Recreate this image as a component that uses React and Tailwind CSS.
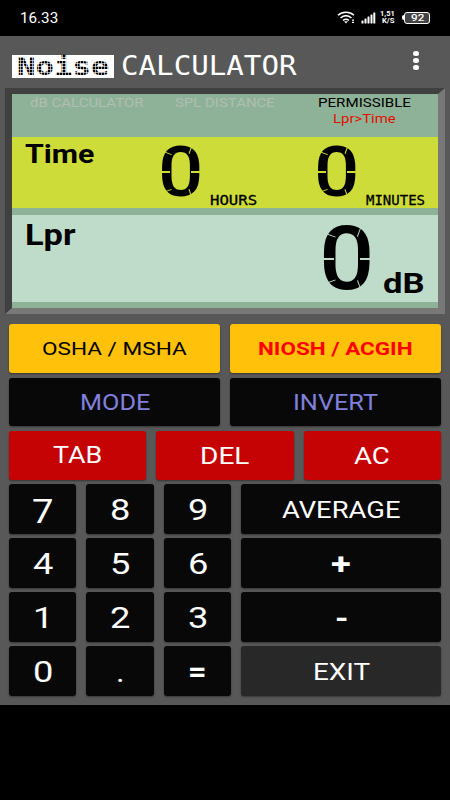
import React, { useLayoutEffect, useRef, useState } from 'react';

// text squeezed or stretched to the width of its box
const Fit = ({ box, className = '', children }) => {
    const outer = useRef(null);
    const inner = useRef(null);
    const [scale, setScale] = useState(1);

    useLayoutEffect(
        () => {
            setScale(outer.current.clientWidth / inner.current.offsetWidth);
        },
        [children]
    )

    return (
        <span ref={outer} className={`block shrink-0 text-left ${box}`}>
            <span
                ref={inner}
                className={`block w-max whitespace-nowrap origin-left ${className}`}
                style={{ transform: `scaleX(${scale})` }}
            >
                {children}
            </span>
        </span>
    );
}

const Digit = ({ box, font, gap, value }) => {
    return (
        <div className={`relative shrink-0 ${box}`}>
            <Fit box="w-full" className={`font-[Roboto,sans-serif] font-medium ${font}`}>{value}</Fit>
            <span className={`absolute left-0 top-[49%] h-[2px] w-[26%] ${gap}`}></span>
            <span className={`absolute right-0 top-[49%] h-[2px] w-[26%] ${gap}`}></span>
            <span className={`absolute left-[4%] top-[12%] h-px w-[26%] rotate-[20deg] ${gap}`}></span>
            <span className={`absolute left-[4%] bottom-[12%] h-px w-[26%] rotate-[-20deg] ${gap}`}></span>
            <span className={`absolute right-[26%] top-[-1%] h-[18%] w-px rotate-[20deg] ${gap}`}></span>
            <span className={`absolute right-[26%] bottom-[-1%] h-[18%] w-px rotate-[-20deg] ${gap}`}></span>
        </div>
    );
}

const Key = ({ color = 'bg-[#080808] text-white', box, font = 'text-[29px]', className = 'pt-[2px]', children }) => {
    return (
        <button
            type="button"
            className={`flex items-center justify-center rounded-[3px] shadow-[0_1px_2px_rgba(0,0,0,0.4)] ${color} ${className}`}
        >
            <Fit box={box} className={`leading-none ${font}`}>{children}</Fit>
        </button>
    );
}

const StatusBar = () => {
    return (
        <div className="flex h-9 justify-between bg-black pl-5 pr-5 text-white">
            <Fit box="w-[38px] pt-[10px]" className="text-[14px] leading-[16px]">16.33</Fit>
            <div className="flex pt-[11px]">
                <svg width="18" height="13" viewBox="0 0 18 13" fill="none" stroke="white" strokeWidth="1.5">
                    <path d="M1 4.2C5.5 0.2 12.5 0.2 17 4.2" />
                    <path d="M3.5 7C7 4 11 4 14.5 7" />
                    <path d="M6 9.4C8 7.8 10 7.8 12 9.4" />
                    <path d="M9 12.4L7 10.3H11Z" fill="white" stroke="none" />
                    <path d="M15 9.2H17M15 11.4H17" strokeWidth="1.2" />
                </svg>
                <svg className="ml-[6px]" width="15" height="13" viewBox="0 0 15 13" fill="white">
                    <rect x="0.5" y="9.5" width="2" height="3" rx="0.5" />
                    <rect x="3.5" y="7.5" width="2" height="5" rx="0.5" />
                    <rect x="6.5" y="5.5" width="2" height="7" rx="0.5" />
                    <rect x="9.5" y="3.5" width="2" height="9" rx="0.5" />
                    <rect x="12.3" y="1.5" width="2" height="11" rx="0.5" />
                </svg>
                <div className="ml-[4px] flex flex-col items-center text-[7px] font-bold leading-[7px]">
                    <Fit box="w-[15px]">1,51</Fit>
                    <Fit box="w-[12px]">K/S</Fit>
                </div>
                <div className="ml-[7px] mt-[4px] h-[5px] w-[2px] rounded-l bg-white"></div>
                <div className="mt-[1px] flex h-[12px] w-[26px] items-center justify-center rounded-[3px] border border-white bg-[#444]">
                    <Fit box="w-[13px]" className="text-[9px] font-medium leading-[9px]">92</Fit>
                </div>
            </div>
        </div>
    );
}

const Header = () => {
    return (
        <div className="flex h-[52px] items-start pl-3">
            <div className="relative mt-[19px] h-[23px] w-[102px] bg-white pl-[5px] text-black">
                <Fit box="w-[92px]" className="font-['DejaVu_Sans_Mono',monospace] text-[25px] leading-[23px] font-bold">Noise</Fit>
                <div className="absolute inset-0 bg-[repeating-linear-gradient(to_right,transparent_0_2px,rgba(255,255,255,0.6)_2px_3px),repeating-linear-gradient(to_bottom,transparent_0_2px,rgba(255,255,255,0.6)_2px_3px)]"></div>
            </div>
            <Fit box="ml-[7px] mt-[17px] w-[176px]" className="font-['DejaVu_Sans_Mono',monospace] text-[27px] leading-[26px] text-white">CALCULATOR</Fit>
            <div className="ml-auto mr-[31px] mt-[15px] flex flex-col gap-[2px]">
                <span className="h-[5px] w-[6px] rounded-full bg-white"></span>
                <span className="h-[5px] w-[6px] rounded-full bg-white"></span>
                <span className="h-[5px] w-[6px] rounded-full bg-white"></span>
            </div>
        </div>
    );
}

const Display = () => {
    const lcd = "font-['DejaVu_Sans_Mono',monospace] text-[14px] leading-[14px] [-webkit-text-stroke:0.3px_black]";

    return (
        <div className="mx-[5px] h-[226px] border-x-[7px] border-y-[6px] border-t-[#404040] border-r-[#787878] border-b-[#787878] border-l-[#404040] bg-[#8eb297]">
            <div className="flex h-[43px] pl-[18px] pt-[1px] text-[13px] leading-[15px] text-[#b0beb3]">
                <Fit box="w-[113px]">dB CALCULATOR</Fit>
                <Fit box="ml-[32px] w-[100px]">SPL DISTANCE</Fit>
                <div className="ml-[43px] flex flex-col items-center text-black">
                    <Fit box="w-[93px]">PERMISSIBLE</Fit>
                    <Fit box="w-[63px] mt-[1px]" className="text-[#e01000]">Lpr&gt;Time</Fit>
                </div>
            </div>
            <div className="flex h-[71px] bg-[#cddc39] pl-[13px] text-black">
                <Fit box="w-[69px]" className="text-[25px] leading-[35px] font-bold">Time</Fit>
                <Digit box="ml-[64px] mt-[9px] h-[52px] w-[45px]" font="text-[71px] leading-[52px]" gap="bg-[#cddc39]" value="0" />
                <Fit box="ml-[7px] mt-[56px] w-[47px]" className={lcd}>HOURS</Fit>
                <Digit box="ml-[57px] mt-[9px] h-[52px] w-[45px]" font="text-[71px] leading-[52px]" gap="bg-[#cddc39]" value="0" />
                <Fit box="ml-[7px] mt-[56px] w-[59px]" className={lcd}>MINUTES</Fit>
            </div>
            <div className="mt-[7px] flex h-[87px] bg-[#bfdcca] pl-[13px] text-black">
                <Fit box="w-[51px]" className="text-[29px] leading-[40px] font-bold">Lpr</Fit>
                <Digit box="ml-[243px] mt-[11px] h-[65px] w-[56px]" font="text-[89px] leading-[65px]" gap="bg-[#bfdcca]" value="0" />
                <Fit box="ml-[8px] mt-[54px] w-[42px]" className="text-[28px] leading-[30px] font-bold">dB</Fit>
            </div>
        </div>
    );
}

const Keypad = () => {
    const yellow = 'bg-[#ffc10a]';
    const red = 'bg-[#c50204] text-white';
    const violet = 'bg-[#080808] text-[#8080dc]';

    return (
        <div className="px-[9px] pt-[10px]">
            <div className="grid grid-cols-2 gap-x-[10px]">
                <Key color={`${yellow} text-black`} box="w-[145px]" font="text-[19px]" className="h-[49px]">OSHA / MSHA</Key>
                <Key color={`${yellow} text-[#ff0000]`} box="w-[155px]" font="text-[19px] font-bold" className="h-[49px]">NIOSH / ACGIH</Key>
                <Key color={violet} box="w-[70px]" font="text-[22px]" className="mt-[5px] h-[48px] pt-px">MODE</Key>
                <Key color={violet} box="w-[85px]" font="text-[22px]" className="mt-[5px] h-[48px] pt-px">INVERT</Key>
            </div>
            <div className="mt-[5px] grid grid-cols-3 gap-x-[10px]">
                <Key color={red} box="w-[49px]" font="text-[23px]" className="h-[49px]">TAB</Key>
                <Key color={red} box="w-[50px]" font="text-[23px]" className="h-[49px] pt-px">DEL</Key>
                <Key color={red} box="w-[36px]" font="text-[23px]" className="h-[49px] pt-px">AC</Key>
            </div>
            <div className="mt-1 grid auto-rows-[50px] grid-cols-[67px_68px_67px_200px] gap-x-[10px] gap-y-1">
                <Key box="w-[22px]" font="text-[33px]" className="pt-[5px]">7</Key>
                <Key box="w-[20px]">8</Key>
                <Key box="w-[20px]">9</Key>
                <Key box="w-[119px]" font="text-[23px]">AVERAGE</Key>
                <Key box="w-[20px]">4</Key>
                <Key box="w-[20px]">5</Key>
                <Key box="w-[20px]">6</Key>
                <Key box="w-[20px]" font="text-[29px] font-bold">+</Key>
                <Key box="w-[20px]">1</Key>
                <Key box="w-[20px]">2</Key>
                <Key box="w-[20px]">3</Key>
                <Key box="w-[13px]" font="text-[29px] font-bold">-</Key>
                <Key box="w-[20px]">0</Key>
                <Key box="w-[9px]">.</Key>
                <Key box="w-[19px]" font="text-[29px] font-bold">=</Key>
                <Key color="bg-[#282828] text-white" box="w-[57px]" font="text-[23px]">EXIT</Key>
            </div>
        </div>
    );
}

const App = () => {
    return (
        <div className="h-[800px] w-[450px] overflow-hidden bg-black font-[Roboto,sans-serif]">
            <StatusBar />
            <div className="h-[669px] bg-[#585858]">
                <Header />
                <Display />
                <Keypad />
            </div>
        </div>
    );
}

export default App;
